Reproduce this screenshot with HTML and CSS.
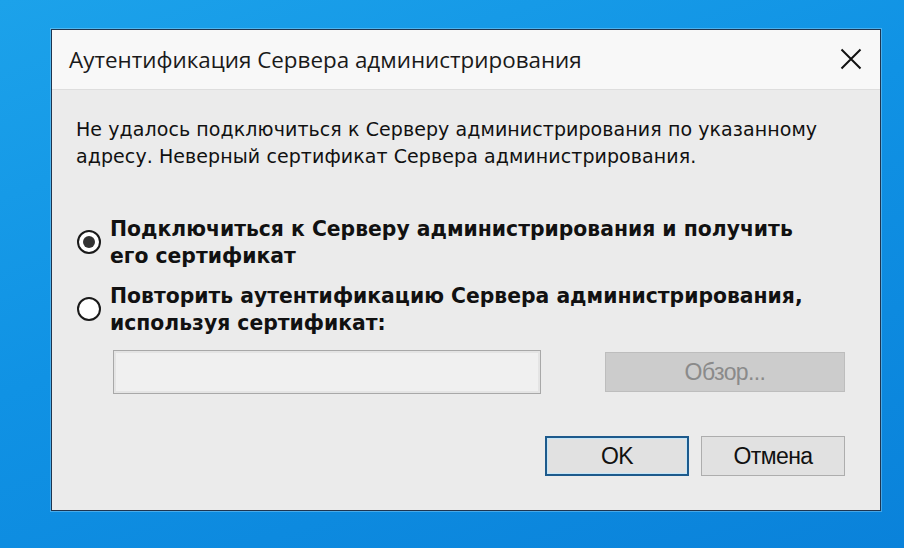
FILE: index.html
```html
<!DOCTYPE html>
<html lang="ru">
<head>
<meta charset="utf-8">
<link rel="stylesheet" href="styles.css">
</head>
<body>
<div class="dialog">
  <div class="titlebar">
    <span class="title">Аутентификация Сервера администрирования</span>
    <svg class="close" width="22" height="22" viewBox="0 0 22 22"><path d="M1.5 1.5L20.5 20.5M20.5 1.5L1.5 20.5" stroke="#111" stroke-width="2" fill="none"/></svg>
  </div>
  <div class="content">
    <p class="message">Не удалось подключиться к Серверу администрирования по указанному<br>адресу. Неверный сертификат Сервера администрирования.</p>
    <div class="option first">
      <span class="radio checked"></span>
      <span class="label">Подключиться к Серверу администрирования и получить<br>его сертификат</span>
    </div>
    <div class="option second">
      <span class="radio"></span>
      <span class="label">Повторить аутентификацию Сервера администрирования,<br>используя сертификат:</span>
    </div>
    <div class="filerow">
      <div class="field"></div>
      <div class="btn disabled">Обзор...</div>
    </div>
    <div class="actions">
      <div class="btn default">OK</div>
      <div class="btn">Отмена</div>
    </div>
  </div>
</div>
</body>
</html>
```

FILE: styles.css
```css
html, body {
  margin: 0;
  padding: 0;
  width: 904px;
  height: 548px;
  overflow: hidden;
}
body {
  background: linear-gradient(160deg, #1ca2ea 0%, #1092e4 45%, #0a82da 100%);
  padding-top: 29px;
  box-sizing: border-box;
}
.dialog {
  margin-left: 51px;
  width: 830px;
  height: 482px;
  box-sizing: border-box;
  border: 1px solid #1e3550;
  background: #ebebeb;
  display: flex;
  flex-direction: column;
  box-shadow: 0 0 0 1px rgba(180, 230, 255, 0.35);
}
.titlebar {
  height: 59px;
  background: #f8f8f8;
  border-bottom: 1px solid #dedede;
  display: flex;
  align-items: center;
  justify-content: space-between;
  padding: 0 18px 0 17px;
  flex: none;
}
.title {
  font-family: "Open Sans", "Noto Sans", sans-serif;
  font-size: 22.4px;
  color: #1a1a1a;
}
.close { display: block; margin-top: -2px; }
.content {
  padding: 26px 35px 0 24px;
  font-family: "DejaVu Sans", Verdana, sans-serif;
  color: #111;
  display: flex;
  flex-direction: column;
}
.message {
  margin: 0;
  font-size: 19px;
  line-height: 27px;
  letter-spacing: 0.08px;
}
.option {
  display: flex;
  align-items: center;
  gap: 9px;
  margin-left: 1px;
  font-weight: bold;
  font-size: 20.35px;
  line-height: 27px;
}
.option.first { margin-top: 46px; }
.option.second { margin-top: 13px; }
.radio {
  width: 24px;
  height: 24px;
  border: 2px solid #1a1a1a;
  border-radius: 50%;
  background: #fff;
  box-sizing: border-box;
  flex: none;
  display: flex;
  align-items: center;
  justify-content: center;
  margin-top: -2px;
}
.radio.checked::after {
  content: "";
  width: 12px;
  height: 12px;
  border-radius: 50%;
  background: #333;
}
.filerow {
  display: flex;
  align-items: center;
  justify-content: space-between;
  margin: 13px 0 0 37px;
}
.field {
  width: 428px;
  height: 44px;
  box-sizing: border-box;
  border: 1px solid #a8a8a8;
  background: #f0f0f0;
  box-shadow: inset 0 0 0 2px #e4e4e4;
}
.btn {
  width: 240px;
  height: 40px;
  box-sizing: border-box;
  border: 1px solid #adadad;
  background: #e1e1e1;
  display: flex;
  align-items: center;
  justify-content: center;
  font-family: "Liberation Sans", Arial, sans-serif;
  font-size: 23px;
  letter-spacing: -0.6px;
  color: #111;
}
.btn.disabled {
  background: #cccccc;
  border-color: #bdbdbd;
  color: #8a8a8a;
}
.actions {
  display: flex;
  justify-content: flex-end;
  gap: 12px;
  margin-top: 42px;
}
.actions .btn { width: 144px; }
.btn.default {
  border: 2px solid #1d5a8c;
  box-shadow: inset 0 0 0 1px #c5e6f8;
}
```
